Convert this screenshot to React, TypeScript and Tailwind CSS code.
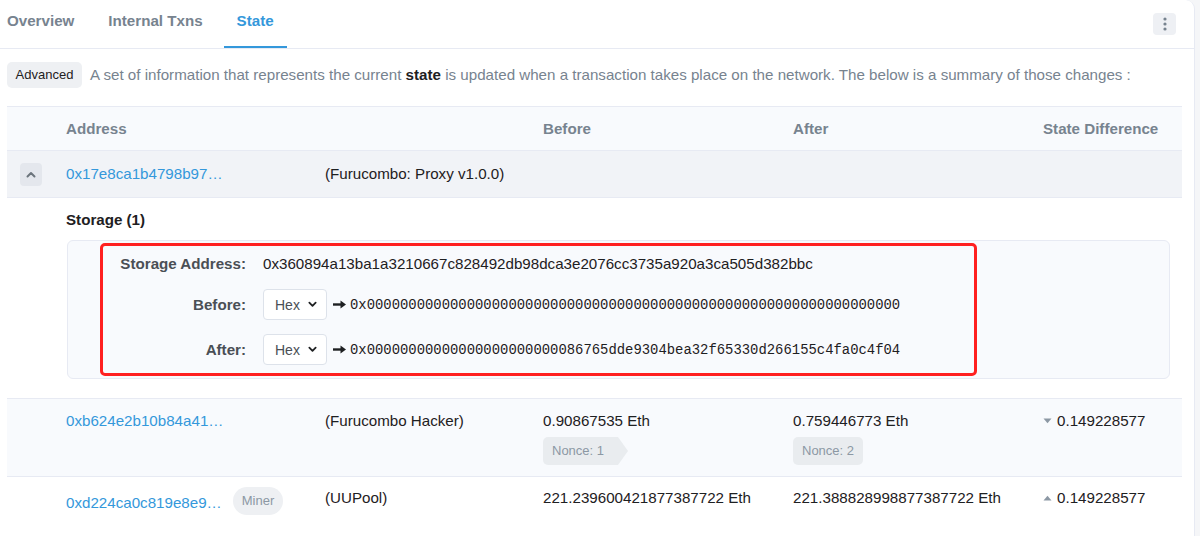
import React from "react";

const Chevron = ({ up = false, className = "" }: { up?: boolean; className?: string }) => (
  <svg width="10" height="7" viewBox="0 0 10 7" className={className}>
    <path
      d={up ? "M1.5 5.5 L5 2 L8.5 5.5" : "M1.5 1.5 L5 5 L8.5 1.5"}
      fill="none"
      stroke="currentColor"
      strokeWidth="2"
      strokeLinecap="round"
      strokeLinejoin="round"
    />
  </svg>
);

const Arrow = () => (
  <svg width="13" height="9" viewBox="0 0 13 9" className="text-[#1e2022]">
    <rect x="0" y="3.3" width="8.5" height="2.4" fill="currentColor" />
    <path d="M7.5 0.5 L13 4.5 L7.5 8.5 Z" fill="currentColor" />
  </svg>
);

const Tri = ({ up = false }: { up?: boolean }) => (
  <svg width="9" height="6" viewBox="0 0 9 6" className="text-[#8c98a4]">
    <path d={up ? "M0.5 5.5 L4.5 0.8 L8.5 5.5 Z" : "M0.5 0.5 L4.5 5.2 L8.5 0.5 Z"} fill="currentColor" />
  </svg>
);

const HexSelect = () => (
  <div className="w-[64px] h-[31px] border border-[#dde2ea] rounded-[4px] bg-white flex items-center pl-[11px] pr-[9px] justify-between text-[14px] text-[#4a4f55]">
    <span>Hex</span>
    <Chevron className="text-[#1e2022] w-[9px]" />
  </div>
);

export default function App() {
  const mono = "font-['Liberation_Mono','DejaVu_Sans_Mono',monospace] text-[13.9px] text-[#1e2022]";
  return (
    <div className="w-[1200px] h-[536px] overflow-hidden bg-[#f5f6f8] font-['Liberation_Sans',Arial,sans-serif] text-[15.15px] text-[#1e2022] leading-[22px]">
      <div className="w-[1195px] h-full bg-white rounded-tr-[9px] border-r border-[#e7eaf3]">
        {/* Tabs */}
        <div className="h-[49px] border-b border-[#e7eaf3] flex justify-between pr-[18px]">
          <div className="flex gap-[8px] ml-[-6px]">
            <div className="h-[48px] px-[13px] pt-[10px] font-bold text-[#77838f]">Overview</div>
            <div className="h-[48px] px-[13px] pt-[10px] font-bold text-[#77838f]">Internal Txns</div>
            <div className="h-[48px] px-[13px] pt-[10px] font-bold text-[#3498db] border-b-2 border-[#3498db]">State</div>
          </div>
          <div className="mt-[13px] w-[23px] h-[22px] rounded-[4px] bg-[#eef0f4] flex items-center justify-center">
            <svg width="4" height="14" viewBox="0 0 4 14" className="text-[#77838f]">
              <circle cx="2" cy="2" r="1.6" fill="currentColor" />
              <circle cx="2" cy="7" r="1.6" fill="currentColor" />
              <circle cx="2" cy="12" r="1.6" fill="currentColor" />
            </svg>
          </div>
        </div>

        {/* Advanced + description */}
        <div className="flex items-center ml-[7px] mt-[13px] h-[26px]">
          <span className="h-[26px] w-[75px] rounded-[5px] bg-[#eef0f3] text-[13px] flex items-center justify-center text-[#1e2022]">
            Advanced
          </span>
          <span className="ml-[8px] text-[#77838f]">
            A set of information that represents the current <b className="text-[#1e2022]">state</b> is updated when a transaction takes place on the network. The below is a summary of those changes :
          </span>
        </div>

        {/* Table */}
        <div className="ml-[7px] mr-[12px] mt-[18px]">
          {/* Header */}
          <div className="grid grid-cols-[59px_259px_218px_250px_250px_1fr] h-[45px] items-center bg-[#f8fafd] border-t border-b border-[#e7eaf3] font-bold text-[#77838f]">
            <div />
            <div>Address</div>
            <div />
            <div>Before</div>
            <div>After</div>
            <div>State Difference</div>
          </div>

          {/* Row 1 */}
          <div className="grid grid-cols-[59px_259px_218px_250px_250px_1fr] h-[47px] items-center bg-[#f1f3f7] border-b border-[#e7eaf3]">
            <div className="pl-[13px]">
              <div className="w-[22px] h-[23px] rounded-[4px] bg-[#e4e7ed] flex items-center justify-center text-[#6c757d]">
                <Chevron up />
              </div>
            </div>
            <div className="text-[#3498db]">0x17e8ca1b4798b97…</div>
            <div className="col-span-4">(Furucombo: Proxy v1.0.0)</div>
          </div>

          {/* Expanded storage */}
          <div className="pl-[59px] pr-[12px] pt-[11px] pb-[19px]">
            <div className="font-bold">Storage (1)</div>
            <div className="mt-[9px] ml-[1px] border border-[#e7eaf3] rounded-[6px] bg-[#f8fafd] pl-[32px] py-[2px]">
              <div className="w-[877px] border-[3px] border-[#ff2020] rounded-[5px] pt-[8px] pb-[8px] flex flex-col">
                <div className="flex h-[20px] items-center">
                  <div className="w-[143px] text-right font-bold text-[#4a4f55]">Storage Address:</div>
                  <div className="ml-[17px]">0x360894a13ba1a3210667c828492db98dca3e2076cc3735a920a3ca505d382bbc</div>
                </div>
                <div className="flex h-[31px] items-center mt-[15px]">
                  <div className="w-[143px] text-right font-bold text-[#4a4f55]">Before:</div>
                  <div className="ml-[17px] flex items-center">
                    <HexSelect />
                    <span className="ml-[6px]"><Arrow /></span>
                    <span className={`ml-[4px] ${mono}`}>0x0000000000000000000000000000000000000000000000000000000000000000</span>
                  </div>
                </div>
                <div className="flex h-[31px] items-center mt-[14px]">
                  <div className="w-[143px] text-right font-bold text-[#4a4f55]">After:</div>
                  <div className="ml-[17px] flex items-center">
                    <HexSelect />
                    <span className="ml-[6px]"><Arrow /></span>
                    <span className={`ml-[4px] ${mono}`}>0x00000000000000000000000086765dde9304bea32f65330d266155c4fa0c4f04</span>
                  </div>
                </div>
              </div>
            </div>
          </div>

          {/* Row 2 */}
          <div className="grid grid-cols-[59px_259px_218px_250px_250px_1fr] bg-[#f8fafd] border-t border-b border-[#e7eaf3] pt-[11px] pb-[11px]">
            <div />
            <div className="text-[#3498db]">0xb624e2b10b84a41…</div>
            <div>(Furucombo Hacker)</div>
            <div className="flex flex-col items-start">
              <div>0.90867535 Eth</div>
              <div className="mt-[5px] flex">
                <div className="h-[28px] pl-[9px] pr-[14px] bg-[#e9ecef] rounded-l-[5px] text-[13px] text-[#8c98a4] flex items-center">Nonce: 1</div>
                <div className="w-0 h-0 border-y-[14px] border-y-transparent border-l-[10px] border-l-[#e9ecef]" />
              </div>
            </div>
            <div className="flex flex-col items-start">
              <div>0.759446773 Eth</div>
              <div className="mt-[5px] h-[28px] px-[9px] bg-[#e9ecef] rounded-[5px] text-[13px] text-[#8c98a4] flex items-center">Nonce: 2</div>
            </div>
            <div className="flex items-center h-[22px] gap-[5px]">
              <Tri />
              <span>0.149228577</span>
            </div>
          </div>

          {/* Row 3 */}
          <div className="grid grid-cols-[59px_259px_218px_250px_250px_1fr] pt-[10px] pb-[11px]">
            <div />
            <div className="flex items-center gap-[11px] h-[28px]">
              <span className="text-[#3498db] mt-[4px]">0xd224ca0c819e8e9…</span>
              <span className="h-[28px] px-[9px] rounded-full bg-[#eef0f3] text-[13px] text-[#8c98a4] flex items-center">Miner</span>
            </div>
            <div>(UUPool)</div>
            <div>221.239600421877387722 Eth</div>
            <div>221.388828998877387722 Eth</div>
            <div className="flex items-center h-[22px] gap-[5px]">
              <Tri up />
              <span>0.149228577</span>
            </div>
          </div>
        </div>
      </div>
    </div>
  );
}
